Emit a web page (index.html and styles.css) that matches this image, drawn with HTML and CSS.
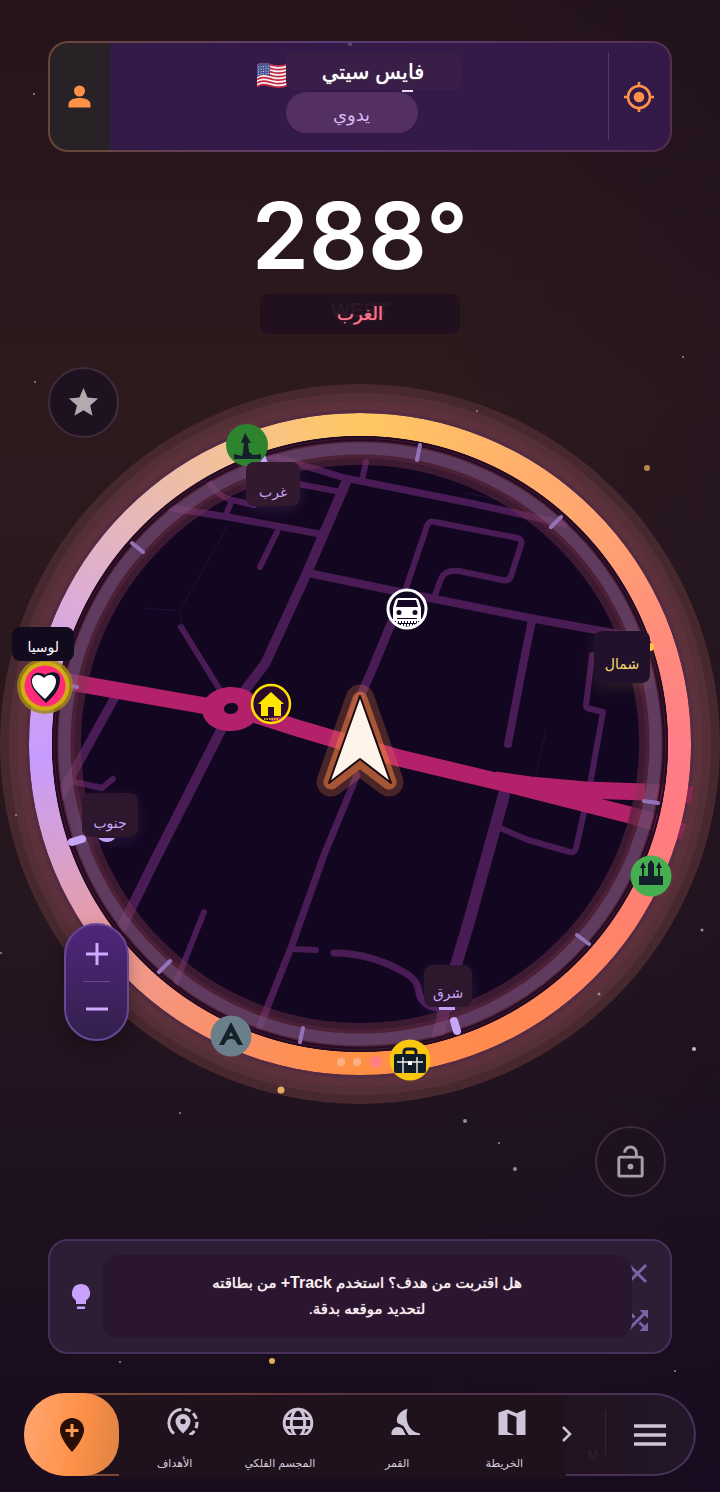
FILE: index.html
```
<!DOCTYPE html>
<html lang="ar" dir="ltr">
<head>
<meta charset="utf-8">
<meta name="viewport" content="width=device-width, initial-scale=1">
<title>فايس سيتي</title>
<link rel="stylesheet" href="styles.css">
</head>
<body>
<div class="app">
  <header class="location">
    <button class="location-side profile" aria-label="الملف الشخصي">
      <svg class="icon" viewBox="0 0 24 24"><path fill="#ff9148" d="M12 4a4 4 0 1 0 0 8 4 4 0 0 0 0-8zM12 13c-4 0-8 1.500-8 4.500V20h16v-2.500c0-3-4-4.500-8-4.500z"/></svg>
    </button>
    <div class="location-main">
      <svg class="flag" viewBox="0 0 32 26" aria-hidden="true">
        <path fill="#f3eef2" d="M1 3C7-1 12 2 17 3s9 1 14-1v21c-5 3-9 2-14 1S7 21 1 25z"/>
        <g fill="none" stroke="#c3263f" stroke-width="1.700"><path d="M1 3.500C7-.5 12 2.500 17 3.500s9 1 14-1M1 7c6-4 11-1 16 0s9 1 14-1M1 10.500c6-4 11-1 16 0s9 1 14-1M1 14c6-4 11-1 16 0s9 1 14-1M1 17.500c6-4 11-1 16 0s9 1 14-1M1 21c6-4 11-1 16 0s9 1 14-1M1 24.500c6-4 11-1 16 0s9 1 14-1"/></g>
        <path fill="#4b5693" d="M1 3c5-3.500 9-2 13-.5V14c-4-1.500-8-2-13 1z"/>
        <g stroke="#c9cbe6" stroke-width="1" stroke-dasharray="1 1.500"><path d="M2 5l11-1M2 7.500l11-1M2 10l11-1M2 12.500l11-1"/></g>
      </svg>
      <h1 class="city" dir="rtl">فايس سيتي</h1>
      <button class="mode">يدوي</button>
    </div>
    <button class="location-side locate" aria-label="تحديد الموقع">
      <svg class="icon icon-lg" viewBox="0 0 30 30"><g fill="none" stroke="#ff9148" stroke-width="2.600"><circle cx="15" cy="15" r="11"/><path d="M15 0v4M15 26v4M0 15h4M26 15h4"/></g><circle cx="15" cy="15" r="5.300" fill="#ff9148"/></svg>
    </button>
  </header>

  <section class="heading">
    <p class="degrees">288°</p>
    <p class="direction"><span class="ghost" aria-hidden="true">WEST</span><span>الغرب</span></p>
  </section>

  <main class="stage">
    <div class="compass">
      <svg class="dial" viewBox="0 384 720 720" role="img" aria-label="البوصلة">
        <defs>
          <clipPath id="disc"><circle cx="360" cy="744" r="336"/></clipPath>
          <clipPath id="inner"><circle cx="360" cy="744" r="304"/></clipPath>
        </defs>
        <circle cx="360" cy="744" r="360" fill="#48282f"/>
        <circle cx="360" cy="744" r="351" fill="#552f38"/>
        <circle cx="360" cy="744" r="343" fill="#5c313c"/>
        <circle cx="360" cy="744" r="334" fill="#542b40"/>
        <circle cx="360" cy="744" r="308" fill="#130620"/>
        <g clip-path="url(#inner)" fill="none" stroke="#4a1c55" stroke-linecap="round" stroke-linejoin="round">
          <path stroke-width="10" d="M347 480L306 575 265 664 245 690M222 728L152 866 118 935"/>
          <path stroke-width="7" d="M262 453L345 478 470 503 565 524"/>
          <path stroke-width="6" d="M366 462L362 480M298 484L336 491"/>
          <path stroke-width="7" d="M165 507L228 517 320 534"/>
          <path stroke-width="6" d="M277 532L260 567M232 500L226 515M208 480q8 16 24 20l22 5"/>
          <path stroke-width="8" d="M308 573L400 592 530 618 640 638"/>
          <path stroke-width="6" d="M406 588L427 526q2-6 8-4l83 16q5 2 3 7l-10 31q-2 6-9 4l-43-9q-14-2-18 8l-6 16"/>
          <path stroke-width="9" d="M402 597L372 670 352 715"/>
          <path stroke-width="7" d="M357 775L324 855 292 945 256 1036"/>
          <path stroke-width="8" d="M532 620L522 670 508 744"/>
          <path stroke-width="6" d="M592 655L586 705q0 4 5 4l12 3L589 790 576 848q-1 5-6 4l-42-12-28-12"/>
          <path stroke-width="12" d="M504 795L493 835 468 925 453 975 437 1040"/>
          <path stroke-width="6" d="M181 627L220 690"/>
          <path stroke-width="9" d="M115 697L58 800"/>
          <path stroke-width="6" d="M66 780l36 8 11-9M204 912L175 985M292 949l24 1"/>
          <path stroke-width="7" d="M334 953q40 0 76 23 8 6 9 17 3 16 30 16"/>
          <path stroke="#23103c" stroke-width="1" d="M228 525L180 611 145 608M181 613v14M546 730l-10 45M465 499l1-6 40 8"/>
        </g>
        <g clip-path="url(#disc)" fill="none" stroke="#b2216a" stroke-width="17">
          <path d="M58 680L212 707"/>
          <path d="M248 712L300 729 395 757 512 785 630 815"/>
          <path d="M495 780L530 785 586 790 645 792"/>
          <path stroke-opacity=".5" d="M630 815L650 821 684 832M645 792L694 795"/>
        </g>
        <path fill="#b2216a" fill-rule="evenodd" d="M231 687c15 0 29 8 29 21s-13 23-30 23-28-10-28-22 14-22 29-22zM232 703c-5 0-8 3-8 6s3 5 7 5 7-3 7-6-2-5-6-5z"/>
        <g fill="none">
          <circle cx="360" cy="744" r="293.500" stroke="#7a3a4c" stroke-opacity=".4" stroke-width="29"/>
          <circle cx="360" cy="744" r="295" stroke="#8b3a50" stroke-opacity=".2" stroke-width="19"/>
          <circle cx="360" cy="744" r="295.500" stroke="#7d6299" stroke-opacity=".42" stroke-width="12"/>
          <circle cx="360" cy="744" r="304" stroke="#240a20" stroke-width="2"/>
          <circle cx="360" cy="744" r="307" stroke="#240a20" stroke-width="2"/>
        </g>
        <foreignObject x="29" y="413" width="662" height="662"><div class="ring"></div></foreignObject>
        <g stroke="#9372b8" stroke-width="4" stroke-linecap="round">
          <path d="M132 543l11 9M420 445l-3 15M561 517l-10 10M644 801l14 2M577 935l12 9M170 961l-11 11M303 1028l-3 14M72 686l5 1"/>
          <path stroke="#c9a6f8" stroke-width="8" d="M72 842l10-3M454 1021l3 10"/>
        </g>
        <path fill="#c9a6f8" d="M264 452l5 14h-10zM98 838h17q-3 4-8 4t-9-4zM439 1007h16v3h-16z"/>
        <circle cx="650" cy="647" r="4" fill="#ffc445"/>
        <g stroke-linejoin="round">
          <path fill="none" stroke="#ff8a4a" stroke-opacity=".23" stroke-width="29" d="M360 699L331 782 360 760 389 782z"/>
          <path fill="none" stroke="#e4783e" stroke-opacity=".6" stroke-width="15" d="M360 699L331 782 360 760 389 782z"/>
          <path fill="#fff4ea" stroke="#1a0b12" stroke-width="2" d="M360 696L329 783 360 759 391 783z"/>
        </g>
        <g fill="#ffb082"><circle cx="341" cy="1062" r="4"/><circle cx="357" cy="1062" r="4"/><circle cx="376" cy="1062" r="6" fill="#ff7f83"/></g>

        <g transform="translate(247 445)"><circle r="21" fill="#2e842e"/><path fill="#14212a" d="M-2-12l6 10H1L2 7l4 3 8-1v5h-27V9l8 2 1-4 1-9h-3z"/></g>
        <g transform="translate(651 876)"><circle r="20.500" fill="#46af4f"/><path fill="#14212a" d="M-12 0h3v-8h-2l3-6 3 6h-2v8h4v-12l3-4 3 4V0h4v-8H5l3-6 3 6H9v8h3v9h-24z"/></g>
        <g transform="translate(231 1036)"><circle r="20.500" fill="#6b7f8a"/><path fill="#14212a" d="M0-14L12 9H7L4 4q-4-2-8 0l-3 5h-5zM0-4l-2 4h4z"/></g>
        <g transform="translate(410 1060)"><circle r="20.500" fill="#f9c80e"/><rect x="-16" y="-6" width="32" height="19" rx="2" fill="#101c28"/><path fill="none" stroke="#101c28" stroke-width="3" d="M-6-5v-3q0-3 3-3h6q3 0 3 3v3"/><path stroke="#eef0e8" stroke-width="1.400" d="M-13 2h26M-7-3v16M7-3v16"/><path fill="#fff" d="M-2 1h4v4h-4z"/></g>
        <g transform="translate(45 686)"><circle r="28" fill="#a08518" opacity=".85"/><circle r="24.500" fill="#d1ad12"/><circle r="20.500" fill="#ff2b78"/><path fill="#111425" d="M1 17C-9 7-14 2-14-5c0-9 9-10 14-6 5-4 15-4 15 4C15 3 9 10 1 17z"/><path fill="#fff" d="M0 13C-8 6-13 1-13-5c0-7 8-8 12-3 4-5 12-4 12 3 0 6-4 11-11 18z"/></g>
        <g transform="translate(407 609)"><circle r="19" fill="#130620" stroke="#fff" stroke-width="3"/><path fill="#fff" fill-rule="evenodd" d="M-9-11H9q2 0 3 3l2 7v13h-28V-1l2-7q1-3 3-3zM-9-9l-2 7h22L9-9zM-8 1a2.500 2.500 0 1 0 0 5 2.500 2.500 0 0 0 0-5zM8 1a2.500 2.500 0 1 0 0 5 2.500 2.500 0 0 0 0-5zM-10 9v1H10V9z"/><path fill="none" stroke="#fff" stroke-width="2" stroke-dasharray="2 1" d="M-11 13h22M-6 16H7"/></g>
        <g transform="translate(271 704)"><circle r="19" fill="#b2216a"/><circle r="19" fill="#130620" opacity=".85"/><path fill="#b2216a" d="M-2 14L14 12 8 17 1 18z"/><circle r="19" fill="none" stroke="#ffe000" stroke-width="2.500"/><path fill="#ffe600" d="M0-12L13 0H10V12H3V3h-6v9h-7V0h-3z"/><path stroke="#ffe600" stroke-width="1.500" stroke-dasharray="1.500 1" d="M-7 15H8"/></g>
      </svg>
      <span class="label label-west">غرب</span>
      <span class="label label-north">شمال</span>
      <span class="label label-south">جنوب</span>
      <span class="label label-east">شرق</span>
      <span class="label label-target">لوسيا</span>
      <div class="zoom">
        <button aria-label="تكبير"><svg viewBox="0 0 22 22"><path stroke="#cfaaff" stroke-width="3" d="M11 0v22M0 11h22"/></svg></button>
        <button aria-label="تصغير"><svg viewBox="0 0 22 22"><path stroke="#cfaaff" stroke-width="3" d="M0 11h22"/></svg></button>
      </div>
    </div>
    <button class="round star" aria-label="المفضلة"><svg viewBox="0 0 24 24"><path fill="#b1abb0" d="M12 17.300l6.200 3.700-1.600-7L22 9.200l-7.200-.6L12 2 9.200 8.600 2 9.200 7.500 14l-1.700 7z"/></svg></button>
    <button class="round lock" aria-label="قفل"><svg viewBox="0 0 24 24"><g fill="none" stroke="#a89fa9" stroke-width="2"><rect x="4" y="9" width="16" height="13" rx="1"/><path d="M8 6a4 4 0 0 1 8 0v3"/></g><circle cx="12" cy="15.500" r="2" fill="#a89fa9"/></svg></button>
  </main>

  <aside class="tip">
    <svg class="bulb" viewBox="0 0 20 28" aria-hidden="true"><path fill="#c9a0ff" d="M10 1a9 9 0 0 0-5 16.500V21h10v-3.500A9 9 0 0 0 10 1zM6 23.500h8V26H6z"/></svg>
    <p class="tip-text" dir="rtl">هل اقتربت من هدف؟ استخدم <b>Track+</b> من بطاقته<br>لتحديد موقعه بدقة.</p>
    <div class="tip-actions">
      <button aria-label="إغلاق"><svg viewBox="0 0 22 22"><path stroke="#7c62a6" stroke-width="3" d="M2 2l18 18M20 2L2 20"/></svg></button>
      <button aria-label="تلميح آخر"><svg viewBox="0 0 22 22"><g fill="none" stroke="#7c62a6" stroke-width="3"><path d="M1 21L19 3M1 1l7 7M13 13l7 7"/></g><path fill="#7c62a6" d="M13 0h9v9l-3-3-3-3zM22 13v9h-9z"/></svg></button>
    </div>
  </aside>

  <nav class="dock">
    <button class="add" aria-label="إضافة هدف"><svg viewBox="0 0 26 36"><path fill="#2a0f06" d="M13 1A12 12 0 0 0 1 13c0 9 12 22 12 22s12-13 12-22A12 12 0 0 0 13 1z"/><path stroke="#ff9a54" stroke-width="3" d="M13 7v13M6.500 13.500h13"/></svg></button>
    <div class="dock-items">
      <a class="dock-item" href="#targets">
        <svg viewBox="0 0 24 20"><g fill="none" stroke="#cfc5d8" stroke-width="2"><path d="M11 2.800a9.200 9.200 0 0 0-5 16.300"/><path stroke-dasharray="4.300 2.100" d="M13 2.800a9.200 9.200 0 0 1 2 17.900"/></g><path fill="#cfc5d8" fill-rule="evenodd" d="M12 6a5 5 0 0 0-5 5c0 3.500 5 8 5 8s5-4.500 5-8a5 5 0 0 0-5-5zm0 3.200a1.800 1.800 0 1 1 0 3.600 1.800 1.800 0 0 1 0-3.600z"/></svg>
        <span>الأهداف</span>
      </a>
      <a class="dock-item dock-item-wide" href="#globe">
        <svg viewBox="0 0 24 20"><g fill="none" stroke="#cfc5d8" stroke-width="2"><circle cx="12" cy="12" r="9.200"/><ellipse cx="12" cy="12" rx="4.500" ry="9.200"/><path d="M3 9h18M3 15h18"/></g></svg>
        <span>المجسم الفلكي</span>
      </a>
      <a class="dock-item" href="#moon">
        <svg viewBox="0 0 24 20"><path fill="#cfc5d8" d="M13.700 2.500C8 4 5.500 9 7 12l4 2 3.500 6H22v-1C15 18 11.500 11 13.700 2.500zM3 20v-2c1-3.500 5-4.500 7.500-2l2 4z"/></svg>
        <span>القمر</span>
      </a>
      <a class="dock-item" href="#map">
        <svg viewBox="0 0 24 20"><path fill="#cfc5d8" fill-rule="evenodd" d="M3 5l6-2 6 2.500L21 3v18H3zM9 5.500V18l6 2.500V8z"/></svg>
        <span>الخريطة</span>
      </a>
    </div>
    <div class="dock-more">
      <svg class="chevron" viewBox="0 0 12 16" aria-hidden="true"><path fill="none" stroke="#cfc5d8" stroke-width="2.500" d="M2 1l7 7-7 7"/></svg>
      <span class="ghost" aria-hidden="true">M</span>
    </div>
    <button class="menu" aria-label="القائمة"><svg viewBox="0 0 32 22"><path stroke="#cfc5d8" stroke-width="3.500" d="M0 2h32M0 11h32M0 20h32"/></svg></button>
  </nav>

  <svg class="stars" viewBox="0 0 720 1492" aria-hidden="true">
    <g fill="#9a8c94"><circle cx="34" cy="94" r="1"/><circle cx="683" cy="357" r="1"/><circle cx="35" cy="382" r="1"/><circle cx="477" cy="411" r="1"/><circle cx="16" cy="815" r="1"/><circle cx="1" cy="953" r="1"/><circle cx="702" cy="930" r="1.500"/><circle cx="599" cy="994" r="1.500"/><circle cx="694" cy="1049" r="2" fill="#c4bac2"/><circle cx="465" cy="1121" r="2"/><circle cx="499" cy="1143" r="1"/><circle cx="515" cy="1169" r="2"/><circle cx="180" cy="1113" r="1"/><circle cx="120" cy="1362" r="1"/><circle cx="675" cy="1371" r="1"/></g>
    <circle cx="350" cy="44" r="2" fill="#614574"/>
    <g fill="#e5ad60"><circle cx="647" cy="468" r="3" opacity=".75"/><circle cx="281" cy="1090" r="3.500"/><circle cx="272" cy="1361" r="3"/></g>
  </svg>
</div>
</body>
</html>
```

FILE: styles.css
```
* {
  box-sizing: border-box;
}

body {
  margin: 0;
  background: #1a0e1d;
  color: #fff;
  font-family: "Liberation Sans", "DejaVu Sans", sans-serif;
}

h1,
p {
  margin: 0;
}

button {
  display: flex;
  align-items: center;
  justify-content: center;
  padding: 0;
  border: 0;
  background: none;
  color: inherit;
  font: inherit;
  cursor: pointer;
}

svg {
  display: block;
}

.app {
  position: relative;
  display: flex;
  flex-direction: column;
  padding: 41px 0 16px;
  overflow: hidden;
  background:
    linear-gradient(90deg, transparent 60%, rgba(20, 8, 34, 0.2)),
    linear-gradient(#25141b, #2c1a1d 27%, #25161f 62%, #1f1220 78%, #1a0e1e 92%, #180c1e);
}

.stars {
  position: absolute;
  inset: 0;
  width: 100%;
  pointer-events: none;
}

.ghost {
  position: absolute;
  color: rgba(120, 90, 120, 0.14);
  font-weight: 700;
}

/* Location card */
.location {
  display: grid;
  grid-template-columns: 58px 1fr 62px;
  margin: 0 48px;
  min-height: 111px;
  border: 2px solid transparent;
  border-radius: 20px;
  background:
    linear-gradient(90deg, #282126 60px, #341a48 60px) padding-box,
    linear-gradient(90deg, #6b4634, #5c3c78 45%, #55304f) border-box;
}

.icon {
  width: 33px;
  height: 33px;
}

.icon-lg {
  width: 30px;
  height: 30px;
}

.locate {
  position: relative;
}

.locate::before {
  content: "";
  position: absolute;
  left: 0;
  top: 10px;
  bottom: 10px;
  width: 1px;
  background: #573a60;
}

.location-main {
  display: grid;
  grid-template-columns: 30px 175px;
  grid-template-rows: 40px 41px;
  align-content: start;
  justify-content: center;
  padding-top: 9px;
}

.flag {
  width: 32px;
  height: 26px;
  align-self: center;
  margin-top: 6px;
}

.city {
  position: relative;
  height: 38px;
  border-radius: 8px;
  background: #391f47;
  font-size: 21px;
  font-weight: 400;
  line-height: 40px;
  text-align: center;
  text-shadow: 0 0 1px currentColor;
}

.city::after {
  content: "";
  position: absolute;
  left: 116px;
  bottom: -2px;
  width: 11px;
  height: 2px;
  background: #e9dcf0;
}

.mode {
  grid-column: 2;
  width: 132px;
  height: 41px;
  padding-top: 4px;
  border-radius: 21px;
  background: #532f62;
  color: #d9b8f5;
  font-size: 18px;
}

/* Heading */
.heading {
  display: flex;
  flex-direction: column;
  align-items: center;
  padding-top: 34px;
}

.degrees {
  font: 600 92px/100px Inter, sans-serif;
}

.direction {
  position: relative;
  display: flex;
  justify-content: center;
  width: 200px;
  height: 40px;
  margin-top: 8px;
  border-radius: 8px;
  background: #21101d;
  color: #ff7288;
  font-size: 18px;
  line-height: 40px;
  text-shadow: 0 0 1px currentColor;
}

.direction .ghost {
  top: -4px;
  font-size: 20px;
  text-shadow: none;
}

/* Compass */
.stage {
  position: relative;
  margin-top: 50px;
}

.compass {
  position: relative;
}

.dial {
  width: 100%;
}

.ring {
  width: 662px;
  height: 662px;
  border-radius: 50%;
  background: conic-gradient(#ffc862, #ffb06c 30deg, #ffa272 50deg, #ff8a7c 72deg, #ff7d88 92deg, #ff7c7c 110deg, #ff8466 130deg, #ff8a50 155deg, #ff9044 180deg, #fb9068 205deg, #f09a90 228deg, #d9a0c8 248deg, #c79cff 268deg, #cda1f0 280deg, #dcabd8 296deg, #e8b9b4 317deg, #f3c09a 334deg, #fbc47a 348deg, #ffc862);
  -webkit-mask: radial-gradient(closest-side, transparent 93%, #000 93.200%);
  mask: radial-gradient(closest-side, transparent 93%, #000 93.200%);
}

.label {
  position: absolute;
  display: flex;
  align-items: flex-end;
  justify-content: center;
  width: 56px;
  height: 44px;
  padding-bottom: 4px;
  border-radius: 8px;
  background: #2c172d;
  box-shadow: 0 4px 16px rgba(160, 120, 220, 0.14);
  color: #c9a6f8;
  font-size: 14px;
  line-height: 20px;
}

.label-west {
  left: 34.200%;
  top: 10.800%;
  width: 54px;
  background: #33192e;
}

.label-north {
  left: 82.500%;
  top: 34.300%;
  height: 52px;
  padding-bottom: 9px;
  background: #22112a;
  box-shadow: 0 4px 16px rgba(255, 220, 100, 0.12);
  color: #f6dc77;
}

.label-south {
  left: 11.400%;
  top: 56.800%;
}

.label-east {
  left: 58.900%;
  top: 80.700%;
  width: 48px;
  height: 42px;
}

.label-target {
  left: 1.700%;
  top: 33.800%;
  width: 62px;
  height: 34px;
  background: #110b1d;
  box-shadow: none;
  color: #fff;
}

.zoom {
  position: absolute;
  left: 8.900%;
  top: 74.800%;
  display: flex;
  flex-direction: column;
  width: 65px;
  height: 118px;
  padding: 2px 0;
  border: 2px solid #6a4796;
  border-radius: 33px;
  background: linear-gradient(#4f267c, #33204c);
  box-shadow: 0 6px 16px rgba(0, 0, 0, 0.3);
}

.zoom button {
  flex: 1;
  margin: 0 17px;
}

.zoom button + button {
  border-top: 1px solid #69498a;
}

.zoom svg {
  width: 22px;
  height: 22px;
}

.round {
  width: 71px;
  height: 71px;
  border: 2px solid #3f2d3e;
  border-radius: 50%;
  background: #1f1220;
}

.round svg {
  width: 35px;
  height: 35px;
}

.star {
  position: absolute;
  left: 48px;
  top: -17px;
}

.lock {
  margin: 22px 54px 0 auto;
}

/* Tip card */
.tip {
  display: grid;
  grid-template-columns: 52px 1fr 38px;
  align-items: center;
  margin: 42px 48px 0;
  padding: 14px 0;
  border: 2px solid #46305a;
  border-radius: 20px;
  background: #2d1e36;
}

.bulb {
  width: 20px;
  height: 28px;
  margin-left: 21px;
}

.tip-text {
  position: relative;
  z-index: 1;
  padding: 15px 16px 16px;
  border-radius: 16px;
  background: #2a172f;
  color: #fbeef2;
  font-size: 15px;
  line-height: 26px;
  text-align: center;
  text-shadow: 0 0 1px currentColor;
}

.tip-text b {
  font-size: 16px;
  text-shadow: none;
}

.tip-actions {
  display: flex;
  flex-direction: column;
  align-items: center;
  gap: 26px;
  margin-right: 28px;
}

.tip-actions svg {
  width: 21px;
  height: 21px;
}

/* Bottom dock */
.dock {
  display: flex;
  height: 83px;
  margin: 39px 24px 0;
  border: 2px solid transparent;
  border-radius: 42px;
  background:
    linear-gradient(90deg, #20121d 70%, #231628) padding-box,
    linear-gradient(90deg, #8a4f35, #5a3240 50%, #46305a) border-box;
}

.add {
  flex: none;
  width: 95px;
  margin: -2px 0 -2px -2px;
  border-radius: 42px 36px 36px 42px;
  background: linear-gradient(100deg, #ffa36c 10%, #ff9148 55%, #dc8244);
}

.add svg {
  width: 26px;
  height: 36px;
}

.dock-items {
  flex: 1;
  display: flex;
  margin-bottom: -5px;
  padding: 10px 0 0 10px;
  background: #20121d;
}

.dock-item {
  flex: 1;
  display: flex;
  flex-direction: column;
  align-items: center;
  gap: 20px;
  color: #d6ccdc;
  font-size: 11px;
  line-height: 16px;
  text-decoration: none;
  white-space: nowrap;
}

.dock-item svg {
  width: 36px;
  height: 30px;
}

.dock-item span {
  padding-right: 16px;
}

.dock-item-wide {
  padding-left: 8px;
}

.dock-item-wide span {
  padding-right: 36px;
}

.dock-more {
  position: relative;
  flex: none;
  width: 40px;
  margin: 15px 0 19px;
  border-right: 1px solid #37253c;
}

.chevron {
  width: 12px;
  height: 16px;
  margin: 16px 0 0 -5px;
}

.dock-more .ghost {
  right: 7px;
  bottom: -7px;
  font-size: 13px;
}

.menu {
  flex: none;
  width: 88px;
}

.menu svg {
  width: 32px;
  height: 22px;
}
```
